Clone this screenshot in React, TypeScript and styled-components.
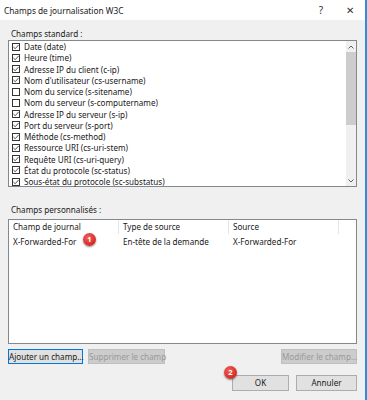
import React from 'react';
import styled, { createGlobalStyle } from 'styled-components';

const GlobalStyle = createGlobalStyle`
  html, body {
    margin: 0;
    padding: 0;
    background: #f0f0f0;
  }
  * {
    box-sizing: border-box;
  }
`;

const Window = styled.div`
  width: 367px;
  height: 400px;
  background: #f0f0f0;
  border-right: 2px solid #2b8fdc;
  font-family: 'Noto Sans', 'Segoe UI', sans-serif;
  font-size: 8.1px;
  line-height: 11px;
  color: #1a1a1a;
  display: flex;
  flex-direction: column;
  overflow: hidden;
`;

const TitleBar = styled.div`
  height: 20px;
  background: #ffffff;
  display: flex;
  align-items: center;
  padding-left: 4px;
  font-size: 8.3px;
`;

const Title = styled.div`
  flex: 1;
`;

const TitleButton = styled.div<{ $width: number }>`
  width: ${(p) => p.$width}px;
  text-align: center;
  font-size: 10px;
  color: #333;
`;

const Body = styled.div`
  flex: 1;
  padding: 7px 8px 0 8px;
  display: flex;
  flex-direction: column;
`;

const Label = styled.div<{ $top: number }>`
  margin-top: ${(p) => p.$top}px;
  height: 13px;
  line-height: 13px;
  padding-left: 3px;
`;

const ListBox = styled.div`
  height: 147px;
  background: #ffffff;
  border: 1px solid #828790;
  display: flex;
`;

const Rows = styled.div`
  flex: 1;
`;

const Row = styled.div`
  height: 11.25px;
  line-height: 11px;
  display: flex;
  align-items: center;
  padding-left: 3px;
  gap: 4px;
  white-space: nowrap;
`;

const Box = styled.span`
  width: 8px;
  height: 8px;
  border: 1px solid #333;
  background: #fff;
  display: flex;
  align-items: center;
  justify-content: center;
  flex-shrink: 0;
`;

const ScrollBar = styled.div`
  width: 10px;
  background: #f0f0f0;
  display: flex;
  flex-direction: column;
`;

const Arrow = styled.div`
  height: 11px;
  display: flex;
  align-items: center;
  justify-content: center;
`;

const Track = styled.div`
  flex: 1;
  display: flex;
  flex-direction: column;
`;

const Thumb = styled.div`
  height: 73px;
  background: #cdcdcd;
`;

const ListView = styled.div`
  margin-top: 3px;
  height: 125px;
  background: #ffffff;
  border: 1px solid #828790;
  display: flex;
  flex-direction: column;
`;

const Grid = styled.div`
  display: grid;
  grid-template-columns: 110px 110px 110px;
`;

const HeaderCell = styled.div`
  height: 14px;
  line-height: 14px;
  padding-left: 4px;
  border-right: 1px solid #e5e5e5;
`;

const Cell = styled.div`
  height: 15px;
  line-height: 15px;
  padding-left: 4px;
  position: relative;
`;

const Badge = styled.span<{ $left: number; $top: number }>`
  position: absolute;
  left: ${(p) => p.$left}px;
  top: ${(p) => p.$top}px;
  width: 13px;
  height: 13px;
  border-radius: 50%;
  background: radial-gradient(circle at 40% 35%, #f0605a, #d42a22 70%);
  color: #fff;
  font-size: 7.5px;
  line-height: 13px;
  font-weight: bold;
  text-align: center;
  box-shadow: 0 1px 2px rgba(0, 0, 0, 0.45);
  z-index: 2;
`;

const ButtonRow = styled.div`
  margin-top: 5px;
  display: flex;
  gap: 5px;
`;

const Spacer = styled.div`
  flex: 1;
`;

const Button = styled.div<{ $width: number; $height?: number; $disabled?: boolean; $default?: boolean }>`
  width: ${(p) => p.$width}px;
  height: ${(p) => p.$height ?? 15}px;
  line-height: ${(p) => (p.$height ?? 15) - 2}px;
  text-align: center;
  background: ${(p) => (p.$disabled ? '#cccccc' : '#e1e1e1')};
  color: ${(p) => (p.$disabled ? '#9a9a9a' : '#1a1a1a')};
  border: 1px solid ${(p) => (p.$disabled ? '#bfbfbf' : p.$default ? '#0078d7' : '#adadad')};
  white-space: nowrap;
  position: relative;
`;

const FooterRow = styled.div`
  margin-top: 11px;
  display: flex;
  justify-content: flex-end;
  gap: 7px;
`;

const fields: [string, boolean][] = [
  ['Date (date)', true],
  ['Heure (time)', true],
  ['Adresse IP du client (c-ip)', true],
  ["Nom d'utilisateur (cs-username)", true],
  ['Nom du service (s-sitename)', false],
  ['Nom du serveur (s-computername)', false],
  ['Adresse IP du serveur (s-ip)', true],
  ['Port du serveur (s-port)', true],
  ['Méthode (cs-method)', true],
  ['Ressource URI (cs-uri-stem)', true],
  ['Requête URI (cs-uri-query)', true],
  ['État du protocole (sc-status)', true],
  ['Sous-état du protocole (sc-substatus)', true],
];

const Check = () => (
  <svg width="7" height="6" viewBox="0 0 7 6">
    <path d="M0.5 3 L2.6 5 L6.5 0.6" fill="none" stroke="#333" strokeWidth="1" />
  </svg>
);

const Chevron = ({ up }: { up?: boolean }) => (
  <svg width="6" height="4" viewBox="0 0 6 4">
    <path d={up ? 'M0.5 3.5 L3 1 L5.5 3.5' : 'M0.5 0.5 L3 3 L5.5 0.5'} fill="none" stroke="#606060" strokeWidth="1" />
  </svg>
);

export default function App() {
  return (
    <>
      <GlobalStyle />
      <Window>
        <TitleBar>
          <Title>Champs de journalisation W3C</Title>
          <TitleButton $width={28}>?</TitleButton>
          <TitleButton $width={30}>✕</TitleButton>
        </TitleBar>
        <Body>
          <Label $top={0}>Champs standard :</Label>
          <ListBox>
            <Rows>
              {fields.map(([name, checked]) => (
                <Row key={name}>
                  <Box>{checked && <Check />}</Box>
                  {name}
                </Row>
              ))}
            </Rows>
            <ScrollBar>
              <Arrow>
                <Chevron up />
              </Arrow>
              <Track>
                <Thumb />
              </Track>
              <Arrow>
                <Chevron />
              </Arrow>
            </ScrollBar>
          </ListBox>
          <Label $top={16}>Champs personnalisés :</Label>
          <ListView>
            <Grid>
              <HeaderCell>Champ de journal</HeaderCell>
              <HeaderCell>Type de source</HeaderCell>
              <HeaderCell>Source</HeaderCell>
              <Cell>
                X-Forwarded-For
                <Badge $left={74} $top={-1}>1</Badge>
              </Cell>
              <Cell>En-tête de la demande</Cell>
              <Cell>X-Forwarded-For</Cell>
            </Grid>
          </ListView>
          <ButtonRow>
            <Button $width={75} $default>Ajouter un champ...</Button>
            <Button $width={77} $disabled>Supprimer le champ</Button>
            <Spacer />
            <Button $width={76} $disabled>Modifier le champ...</Button>
          </ButtonRow>
          <FooterRow>
            <Button $width={57} $height={16}>
              OK
              <Badge $left={-9} $top={-10}>2</Badge>
            </Button>
            <Button $width={61} $height={16}>Annuler</Button>
          </FooterRow>
        </Body>
      </Window>
    </>
  );
}
